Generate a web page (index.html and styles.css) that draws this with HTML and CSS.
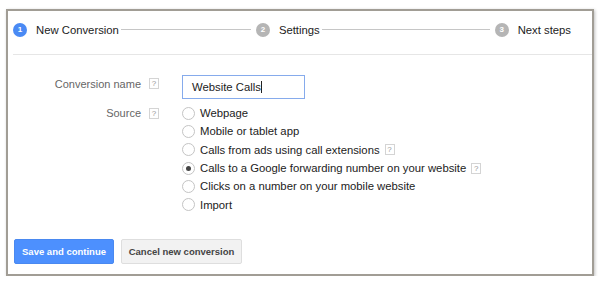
FILE: index.html
```html
<!DOCTYPE html>
<html>
<head>
    <title>New Conversion</title>
    <link rel="stylesheet" href="styles.css">
</head>
<body>
    <div class="frame">
        <div class="stepper">
            <span class="step-num active">1</span>
            <span class="step-label">New Conversion</span>
            <span class="step-line first"></span>
            <span class="step-num">2</span>
            <span class="step-label">Settings</span>
            <span class="step-line"></span>
            <span class="step-num">3</span>
            <span class="step-label">Next steps</span>
        </div>
        <div class="divider"></div>

        <div class="form-row name-row">
            <div class="field-label">Conversion name <span class="help">?</span></div>
            <div class="field">
                <div class="text-input">Website Calls<span class="caret"></span></div>
            </div>
        </div>

        <div class="form-row source-row">
            <div class="field-label">Source <span class="help">?</span></div>
            <div class="field">
                <div class="radio-row"><span class="radio"></span>Webpage</div>
                <div class="radio-row"><span class="radio"></span>Mobile or tablet app</div>
                <div class="radio-row"><span class="radio"></span>Calls from ads using call extensions <span class="help">?</span></div>
                <div class="radio-row"><span class="radio checked"></span>Calls to a Google forwarding number on your website <span class="help">?</span></div>
                <div class="radio-row"><span class="radio"></span>Clicks on a number on your mobile website</div>
                <div class="radio-row"><span class="radio"></span>Import</div>
            </div>
        </div>

        <div class="buttons">
            <button class="btn btn-primary">Save and continue</button>
            <button class="btn btn-default">Cancel new conversion</button>
        </div>
    </div>
</body>
</html>
```

FILE: styles.css
```css
body {
    font-family: Arial, "Liberation Sans", sans-serif;
    margin: 0;
    padding: 0;
    background-color: #fff;
}
.frame {
    margin: 9px 0 0 6px;
    width: 584px;
    height: 263px;
    border: 2px solid #a19d95;
    box-shadow: 1px 1px 3px rgba(0,0,0,0.25);
    background-color: #fff;
}
.stepper {
    display: flex;
    align-items: center;
    height: 37px;
    padding: 0 21px 0 5px;
}
.step-num {
    width: 14px;
    height: 14px;
    border-radius: 50%;
    background-color: #b5b5b5;
    color: #fff;
    font-size: 8px;
    font-weight: bold;
    line-height: 14px;
    text-align: center;
    margin-right: 9px;
    flex-shrink: 0;
}
.step-num.active {
    background-color: #4a8af4;
}
.step-label {
    font-size: 11.3px;
    color: #222;
    white-space: nowrap;
}
.step-line {
    flex: 1;
    height: 1px;
    background-color: #c6c6c6;
    margin: 0 5px 0 2px;
}
.step-line.first {
    flex: 0 0 130px;
}
.divider {
    margin: 6px 0 0 5px;
    height: 1px;
    background-color: #e6e6e6;
}
.form-row {
    display: flex;
    align-items: flex-start;
}
.field-label {
    width: 151px;
    margin-right: 23px;
    display: flex;
    justify-content: flex-end;
    align-items: center;
    gap: 8px;
    font-size: 11px;
    color: #666;
}
.help {
    display: inline-block;
    width: 8px;
    height: 9px;
    border: 1px solid #d4d4d4;
    color: #999;
    font-size: 8px;
    line-height: 9px;
    text-align: center;
    box-sizing: content-box;
}
.name-row {
    margin-top: 20px;
}
.name-row .field-label {
    height: 17px;
}
.text-input {
    width: 112px;
    height: 22px;
    border: 1px solid #86abec;
    padding-left: 9px;
    font-size: 11.3px;
    color: #222;
    line-height: 23px;
    box-sizing: content-box;
}
.caret {
    display: inline-block;
    width: 1px;
    height: 12px;
    background-color: #222;
    vertical-align: -2px;
}
.source-row {
    margin-top: 5px;
}
.source-row .field-label {
    height: 18px;
}
.radio-row {
    display: flex;
    align-items: center;
    height: 18.3px;
    font-size: 11.3px;
    color: #222;
    white-space: nowrap;
}
.radio-row .help {
    margin-left: 5px;
}
.radio {
    width: 11px;
    height: 11px;
    border: 1px solid #c4c4c4;
    border-radius: 50%;
    margin-right: 5px;
    background-color: #fff;
    position: relative;
    flex-shrink: 0;
}
.radio.checked::after {
    content: "";
    position: absolute;
    left: 3px;
    top: 3px;
    width: 5px;
    height: 5px;
    border-radius: 50%;
    background-color: #444;
}
.buttons {
    display: flex;
    gap: 7px;
    margin: 25px 0 0 6px;
}
.btn {
    height: 25px;
    font-family: Arial, "Liberation Sans", sans-serif;
    font-size: 9.5px;
    font-weight: bold;
    border-radius: 2px;
    padding: 0;
}
.btn-primary {
    width: 100px;
    background-color: #4d90fe;
    border: 1px solid #4a89f0;
    color: #fff;
}
.btn-default {
    width: 121px;
    background-color: #f2f2f2;
    border: 1px solid #dedede;
    color: #444;
}
```
